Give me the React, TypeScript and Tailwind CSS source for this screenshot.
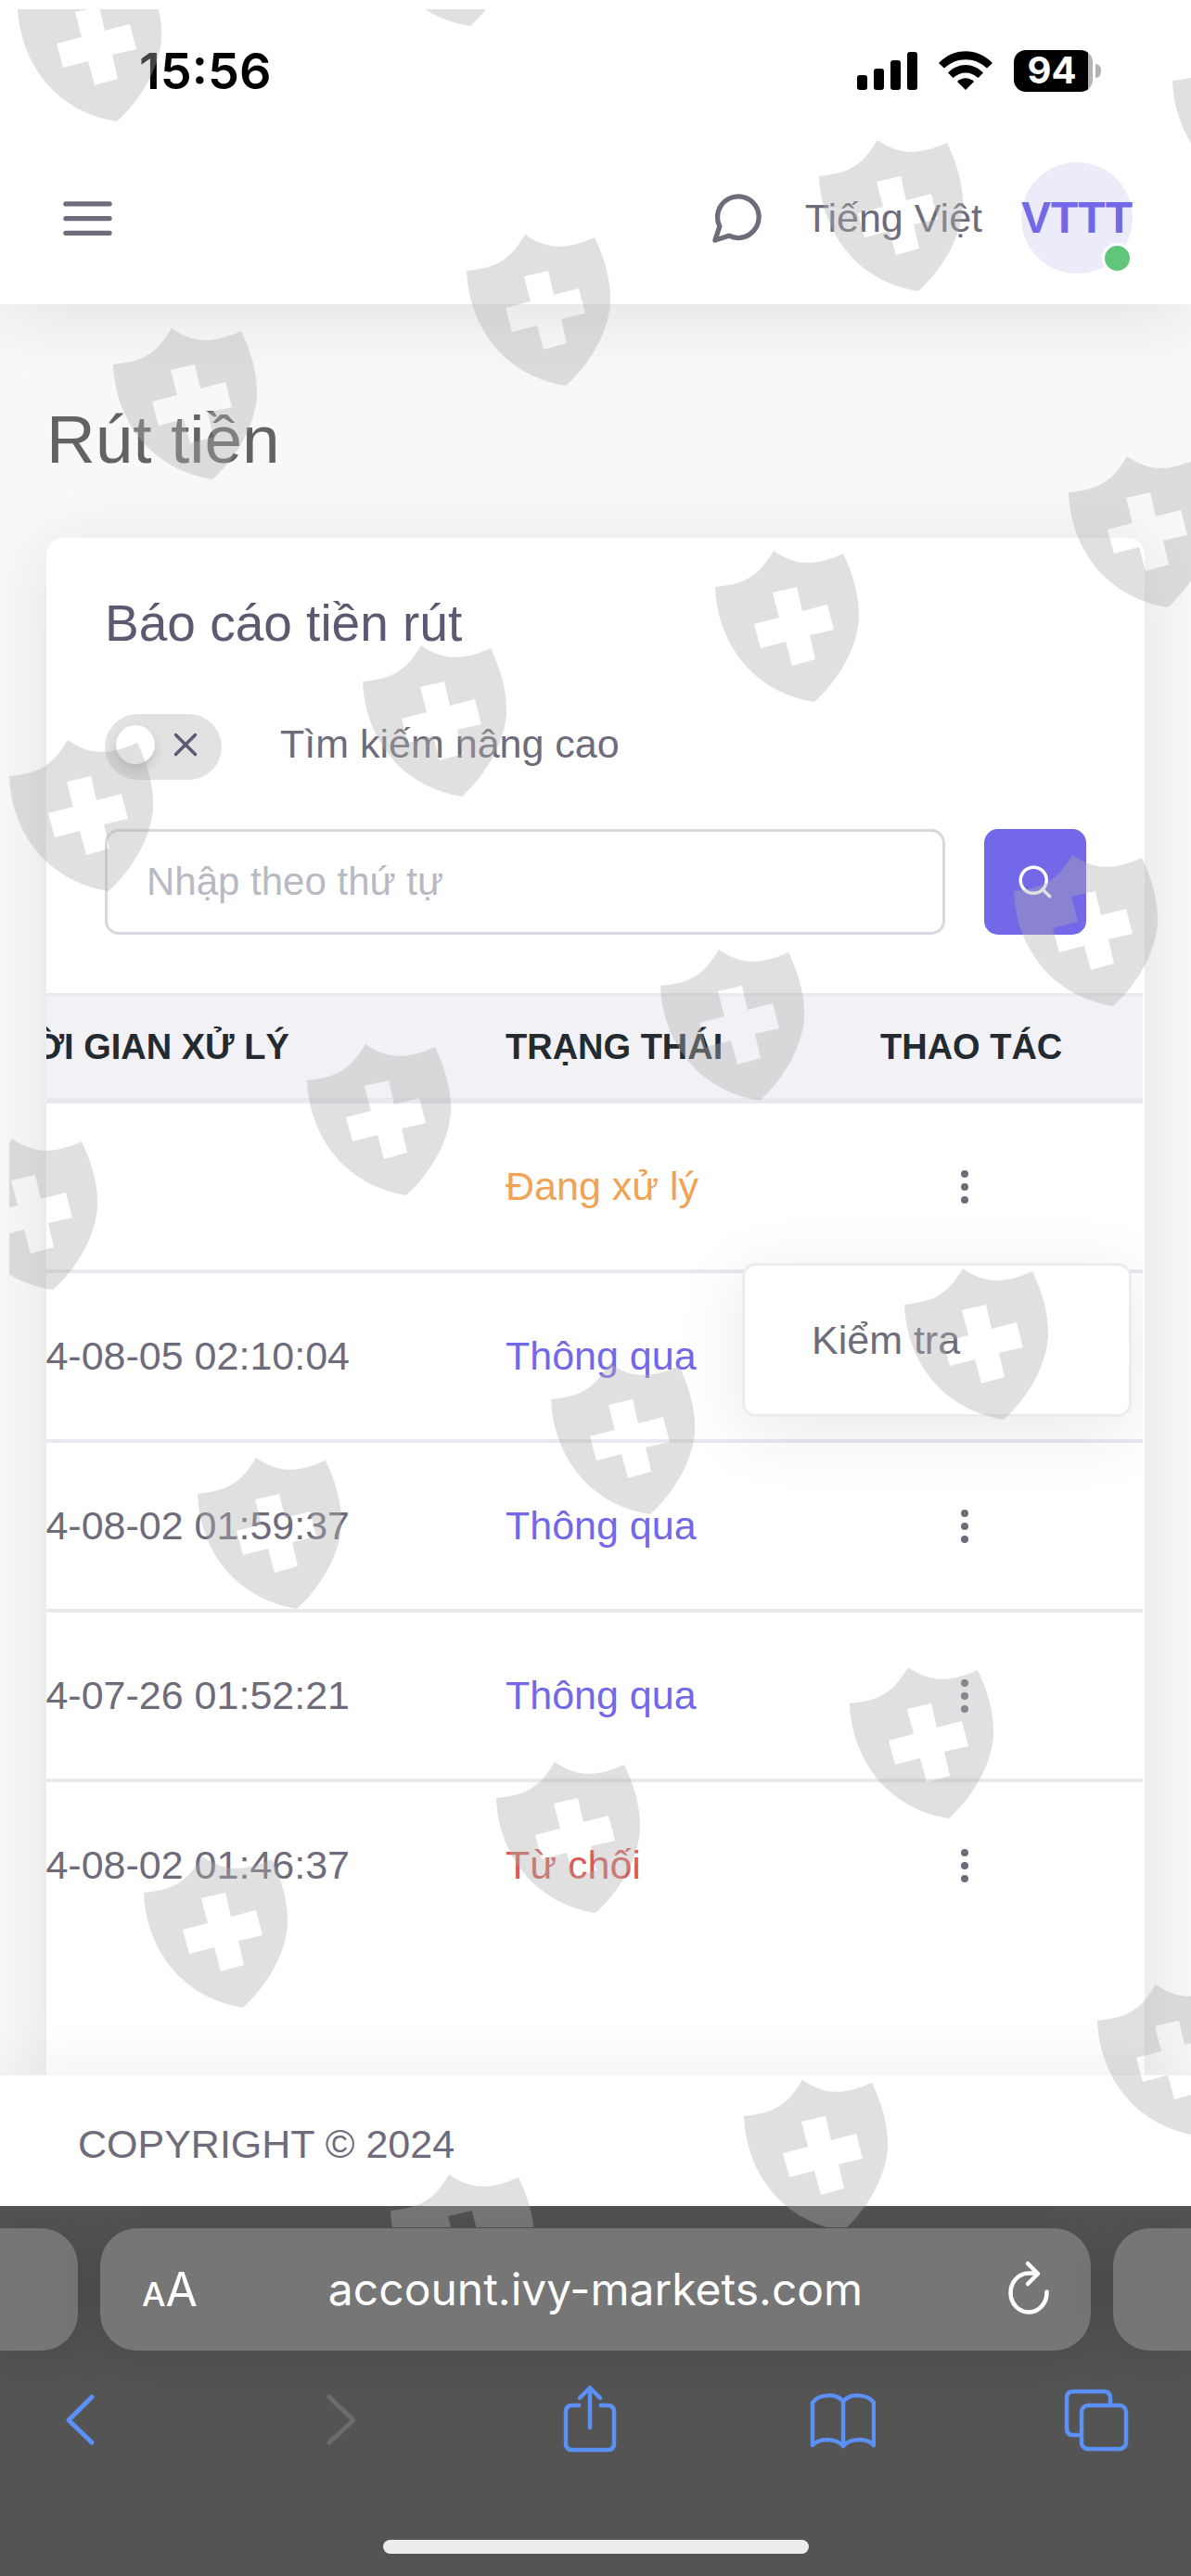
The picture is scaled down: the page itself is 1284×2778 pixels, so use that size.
import { useState } from "react";
import { EllipsisVertical, Search, X } from "lucide-react";

type Row = {
    id: number;
    time: string;
    status: "pending" | "approved" | "rejected";
};

const rows: Row[] = [
    { id: 1, time: "", status: "pending" },
    { id: 2, time: "2024-08-05 02:10:04", status: "approved" },
    { id: 3, time: "2024-08-02 01:59:37", status: "approved" },
    { id: 4, time: "2024-07-26 01:52:21", status: "approved" },
    { id: 5, time: "2024-08-02 01:46:37", status: "rejected" },
];

const statusText = {
    pending: { label: "Đang xử lý", color: "text-[#f0a355]" },
    approved: { label: "Thông qua", color: "text-[#7368e8]" },
    rejected: { label: "Từ chối", color: "text-[#d95b56]" },
};

// top left corner of every shield in the overlay
const shields = [
    [19, -32], [400, -135], [1264, 48], [883, 151], [503, 253], [122, 354],
    [1152, 492], [771, 594], [391, 696], [10, 798],
    [1093, 922], [712, 1024], [331, 1126], [-50, 1228],
    [975, 1368], [594, 1470], [213, 1572],
    [916, 1798], [535, 1900], [155, 2002],
    [1183, 2140], [802, 2243], [421, 2345],
];

function Watermark() {
    return (
        <div className="pointer-events-none absolute inset-0 z-50 overflow-hidden" aria-hidden="true">
            <svg width="1284" height="2778" viewBox="0 0 1284 2778" fill="#b0b0b0" fillOpacity="0.39">
                <defs>
                    <clipPath id="overlay-area">
                        <rect x="10" y="10" width="1274" height="2392" />
                    </clipPath>
                    <path
                        id="shield"
                        fillRule="evenodd"
                        d="M63 0C85 15 105 18 138 3C150 28 156 52 155 74C152 111 128 144 107 163C38 152 2 96 0 39C33 36 47 27 63 0ZM62 45L88 39L94 65L121 58L128 85L102 91L108 117L83 124L76 98L49 105L42 79L69 72Z"
                    />
                </defs>
                <g clipPath="url(#overlay-area)">
                    {shields.map(([x, y]) => (
                        <use key={`${x}-${y}`} href="#shield" x={x} y={y} />
                    ))}
                </g>
            </svg>
        </div>
    );
}

function StatusBar() {
    return (
        <div className="flex h-[142px] items-center justify-between pt-[10px] pr-[97px] pl-[150px] text-black">
            <span className="font-[Inter,sans-serif] text-[54px] font-semibold">15:56</span>
            <div className="flex items-center gap-[23px]">
                <svg width="65" height="42" viewBox="0 0 65 42" fill="currentColor">
                    <rect x="0" y="26" width="11" height="16" rx="3" />
                    <rect x="18" y="19" width="11" height="23" rx="3" />
                    <rect x="36" y="10" width="11" height="32" rx="3" />
                    <rect x="54" y="1" width="11" height="41" rx="3" />
                </svg>
                <svg width="58" height="42" viewBox="0 0 58 42" fill="currentColor">
                    <path d="M0 13C16-4 42-4 58 13L52 18.500C39 6 19 6 6 18.500Z" />
                    <path d="M10 23.500C21 12 37 12 48 23.500L42.500 29C35 21.500 23 21.500 15.500 29Z" />
                    <path d="M20 33C25 28 33 28 38 33L29 42Z" />
                </svg>
                <div className="flex items-center gap-[3px]">
                    <div className="flex h-[45px] w-[85px] items-center justify-center rounded-[13px] bg-linear-to-r from-black from-94% to-[#b3b3b3] to-94% pr-[3px] font-[Inter,sans-serif] text-[40px] font-bold text-white">
                        94
                    </div>
                    <div className="h-[15px] w-[6px] rounded-r-full bg-[#b3b3b3]" />
                </div>
            </div>
        </div>
    );
}

function Navbar() {
    return (
        <nav className="flex h-[186px] items-center justify-between px-[63px]">
            <button type="button" aria-label="Menu">
                <svg width="63" height="63" viewBox="0 0 24 24" stroke="currentColor" strokeWidth="2" strokeLinecap="round">
                    <path d="M3 12H21M3 6H21M3 18H21" />
                </svg>
            </button>
            <div className="flex items-center gap-[42px]">
                <button type="button" aria-label="Chat">
                    <svg width="63" height="63" viewBox="0 0 24 24" fill="none" stroke="currentColor" strokeWidth="2" strokeLinecap="round" strokeLinejoin="round">
                        <path d="M21 11.500a8.380 8.380 0 0 1-.9 3.800 8.500 8.500 0 0 1-7.600 4.700 8.380 8.380 0 0 1-3.800-.9L3 21l1.900-5.700a8.380 8.380 0 0 1-.9-3.800 8.500 8.500 0 0 1 4.700-7.600 8.380 8.380 0 0 1 3.800-.9h.5a8.480 8.480 0 0 1 8 8v.5z" />
                    </svg>
                </button>
                <button type="button">Tiếng Việt</button>
                <button type="button" className="relative flex size-[120px] items-center justify-center rounded-full bg-[#ecebfa] text-[48px] font-bold text-[#7368e8]">
                    VTTT
                    <span className="absolute right-0 bottom-0 size-[33px] rounded-full border-3 border-white bg-[#62c67a]" />
                </button>
            </div>
        </nav>
    );
}

function WithdrawTable() {
    const [openRow, setOpenRow] = useState<number | null>(1);

    return (
        <div className="mr-[2px] flex justify-end overflow-hidden">
            <table className="w-[1330px] shrink-0 table-fixed border-separate border-spacing-0 text-left">
                <thead>
                    <tr className="h-[119px] bg-[#f2f1f6] text-[38px] text-[#242b30] uppercase">
                        <th className="w-[559px] border-t-3 border-b-6 border-[#e9e8ef] px-[84px]">Thời gian xử lý</th>
                        <th className="w-[404px] border-t-3 border-b-6 border-[#e9e8ef] px-[84px]">Trạng thái</th>
                        <th className="border-t-3 border-b-6 border-[#e9e8ef] pl-[84px]">Thao tác</th>
                    </tr>
                </thead>
                <tbody>
                    {rows.map((row) => (
                        <tr key={row.id} className="group h-[183px]">
                            <td className="border-b-4 border-[#e9e8ef] pr-[84px] text-right whitespace-nowrap group-last:border-transparent">{row.time}</td>
                            <td className={`border-b-4 border-[#e9e8ef] px-[84px] whitespace-nowrap group-last:border-b-transparent ${statusText[row.status].color}`}>
                                {statusText[row.status].label}
                            </td>
                            <td className="relative border-b-4 border-[#e9e8ef] pl-[84px] group-last:border-transparent">
                                <button
                                    type="button"
                                    aria-label="Thao tác"
                                    className="flex w-[182px] justify-center"
                                    onClick={() => setOpenRow(openRow === row.id ? null : row.id)}
                                >
                                    <EllipsisVertical size={48} />
                                </button>
                                {openRow === row.id && (
                                    <div className="absolute top-[172px] right-[12px] z-10 w-[420px] rounded-[15px] border-3 border-[#ebecec] bg-white py-[24px] shadow-[0_15px_75px_rgba(34,41,47,0.1)]">
                                        <a href="#check" className="block px-[72px] py-[24px] leading-[64px]">
                                            Kiểm tra
                                        </a>
                                    </div>
                                )}
                            </td>
                        </tr>
                    ))}
                </tbody>
            </table>
        </div>
    );
}

function ReportCard() {
    const [advanced, setAdvanced] = useState(false);

    return (
        <section className="mx-[50px] mt-[70px] flex-1 rounded-t-[18px] bg-white pt-[60px] shadow-[0_12px_72px_rgba(34,41,47,0.1)]">
            <div className="px-[63px]">
                <h2 className="text-[55px] leading-[64px] text-[#5e5873]">Báo cáo tiền rút</h2>
                <label className="mt-[66px] flex items-start gap-[63px]">
                    <input
                        type="checkbox"
                        className="peer sr-only"
                        checked={advanced}
                        onChange={(e) => setAdvanced(e.target.checked)}
                    />
                    <span className="flex h-[71px] w-[126px] items-start justify-between rounded-full bg-[#e2e2e2] pt-[12px] pr-[18px] pl-[12px] text-[#5e5873] peer-checked:bg-[#7368e8]">
                        <span className="size-[42px] rounded-full bg-white shadow-[0_6px_12px_rgba(0,0,0,0.15)]" />
                        <X size={42} />
                    </span>
                    <span className="leading-[64px]">Tìm kiếm nâng cao</span>
                </label>
                <form className="mt-[53px] flex gap-[42px]" onSubmit={(e) => e.preventDefault()}>
                    <input
                        type="text"
                        aria-label="Nhập theo thứ tự"
                        placeholder="Nhập theo thứ tự"
                        className="h-[114px] min-w-0 flex-1 rounded-[15px] border-3 border-[#d8d6de] px-[42px] text-[42px] outline-none placeholder:text-[#b9b9c3]"
                    />
                    <button type="submit" aria-label="Search" className="flex w-[110px] items-center justify-center rounded-[15px] bg-[#7368e8] text-white">
                        <Search size={42} />
                    </button>
                </form>
            </div>
            <div className="mt-[63px]">
                <WithdrawTable />
            </div>
        </section>
    );
}

function BrowserBar() {
    return (
        <div className="relative z-20 overflow-hidden bg-[#545454] pt-[24px] pb-[24px] font-[Inter,sans-serif]">
            <div className="flex h-[132px] gap-[24px]">
                <div className="w-[84px] rounded-r-[40px] bg-[#767676] shadow-[0_0_60px_rgba(0,0,0,0.15)]" />
                <div className="flex flex-1 items-center justify-between rounded-[40px] bg-[#767676] px-[45px] text-white shadow-[0_0_60px_rgba(0,0,0,0.15)]">
                    <button type="button" className="flex w-[60px] items-baseline">
                        <span className="text-[36px] font-medium">A</span>
                        <span className="text-[50px]">A</span>
                    </button>
                    <button type="button" className="text-[48px]">account.ivy-markets.com</button>
                    <button type="button" aria-label="Reload" className="flex w-[60px] justify-end">
                        <svg className="overflow-visible" width="44" height="54" viewBox="0 0 44 54" fill="none" stroke="currentColor" strokeWidth="4.500" strokeLinecap="round" strokeLinejoin="round">
                            <path d="M41.500 29.500A19.500 21 0 1 1 22 9.500H31" />
                            <path d="M21 -1L32 10L21 21" />
                        </svg>
                    </button>
                </div>
                <div className="w-[84px] rounded-l-[40px] bg-[#767676] shadow-[0_0_60px_rgba(0,0,0,0.15)]" />
            </div>
            <div className="mt-[38px] flex justify-between pr-[66px] pl-[50px] text-[#5b91f7]">
                <button type="button" aria-label="Back">
                    <svg width="72" height="72" viewBox="0 0 72 72" fill="none" stroke="currentColor" strokeWidth="5" strokeLinecap="round" strokeLinejoin="round">
                        <path d="M49 12L24 37L49 61" />
                    </svg>
                </button>
                <button type="button" aria-label="Forward" className="text-[#6c6c6e]">
                    <svg width="72" height="72" viewBox="0 0 72 72" fill="none" stroke="currentColor" strokeWidth="5" strokeLinecap="round" strokeLinejoin="round">
                        <path d="M31 12L57 37L31 61" />
                    </svg>
                </button>
                <button type="button" aria-label="Share">
                    <svg className="overflow-visible" width="72" height="72" viewBox="0 0 72 72" fill="none" stroke="currentColor" strokeWidth="4.500" strokeLinecap="round" strokeLinejoin="round">
                        <path strokeLinecap="butt" d="M28 21H19Q12 21 12 28V62Q12 69 19 69H57Q64 69 64 62V28Q64 21 57 21H48" />
                        <path d="M38 45V3M27 13L38 2L49 13" />
                    </svg>
                </button>
                <button type="button" aria-label="Bookmarks">
                    <svg width="72" height="72" viewBox="0 0 72 72" fill="none" stroke="currentColor" strokeWidth="4.500" strokeLinecap="round" strokeLinejoin="round">
                        <path d="M37 17C31 8 11 8 4 18V64C11 56 30 56 37 65C44 56 63 56 70 64V18C63 8 43 8 37 17V65" />
                    </svg>
                </button>
                <button type="button" aria-label="Tabs">
                    <svg width="72" height="72" viewBox="0 0 72 72" fill="none" stroke="currentColor" strokeWidth="4.500">
                        <path d="M18 53H11Q4 53 4 46V13Q4 6 11 6H44Q51 6 51 13V21" />
                        <rect x="20" y="21" width="48" height="47" rx="7" />
                    </svg>
                </button>
            </div>
            <div className="mx-auto mt-[94px] h-[15px] w-[459px] rounded-full bg-[#ededed]" />
        </div>
    );
}

export default function App() {
    return (
        <div className="relative flex min-h-screen flex-col overflow-hidden bg-[#f8f8f8] font-['Liberation_Sans',Arial,sans-serif] text-[43px] text-[#6e6b7b]">
            <header className="relative z-10 bg-white shadow-[0_12px_72px_rgba(34,41,47,0.1)]">
                <StatusBar />
                <Navbar />
            </header>
            <main className="flex flex-1 flex-col pt-[110px]">
                <h1 className="px-[50px] text-[73px] leading-[72px] text-[#636363]">Rút tiền</h1>
                <ReportCard />
            </main>
            <footer className="relative z-10 bg-white px-[84px] pt-[42px] pb-[35px] leading-[64px] shadow-[0_-12px_60px_rgba(34,41,47,0.06)]">
                COPYRIGHT © 2024
            </footer>
            <BrowserBar />
            <Watermark />
        </div>
    );
}
